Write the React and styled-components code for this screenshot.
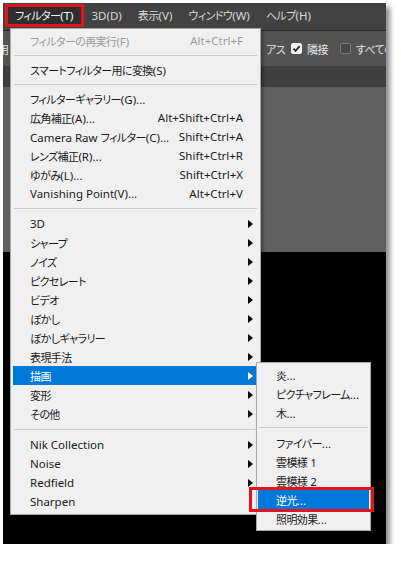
import React from "react";
import styled, { createGlobalStyle } from "styled-components";

const GlobalStyle = createGlobalStyle`
  html, body {
    margin: 0;
    padding: 0;
    background: #ffffff;
  }
  body {
    font-family: "Noto Sans", "Noto Sans CJK JP", sans-serif;
    font-size: 11.5px;
    font-feature-settings: "palt" 1;
  }
`;

// Frame of the screenshot
const Page = styled.div`
  padding: 3px 0 0 3px;
`;
const Frame = styled.div`
  position: relative;
  width: 383px;
  height: 541px;
  display: flex;
  flex-direction: column;
  overflow: hidden;
  box-shadow: 4px 4px 5px rgba(0, 0, 0, 0.45);
`;

// japanese runs are set a bit tighter, like Yu Gothic UI
const Jp = styled.span`
  font-family: "Noto Sans CJK JP", sans-serif;
  font-size: 11px;
  letter-spacing: -0.6px;
`;

const CJK = /([\u3000-\u30ff\u4e00-\u9fff\uff00-\uffef]+)/;
function Txt({ children }) {
  return children
    .split(CJK)
    .filter(Boolean)
    .map((part, i) => (CJK.test(part) ? <Jp key={i}>{part}</Jp> : <span key={i}>{part}</span>));
}

// Menu bar
const MenuBar = styled.div`
  height: 28px;
  box-sizing: border-box;
  padding: 1px 0 0 2px;
  display: flex;
  align-items: flex-start;
  background: #424242;
  border-bottom: 1px solid #2c2c2c;
  flex-shrink: 0;
`;
const BarItem = styled.div`
  height: 23px;
  line-height: 23px;
  padding: 0 ${(p) => (p.$open ? 10 : 8)}px;
  white-space: nowrap;
  background: ${(p) => (p.$open ? "#2e2e2e" : "transparent")};
  color: ${(p) => (p.$open ? "#f4f4f4" : "#d8d8d8")};
  box-shadow: ${(p) => (p.$open ? "inset 0 0 0 3px #e3141b" : "none")};
`;

// Options bar
const OptionsBar = styled.div`
  height: 35px;
  display: flex;
  align-items: center;
  background: #535353;
  color: #e2e2e2;
  white-space: nowrap;
  overflow: hidden;
  flex-shrink: 0;
  & > * {
    flex-shrink: 0;
  }
`;
const OptionsLead = styled.div`
  width: 282px;
  display: flex;
  justify-content: space-between;
  align-items: center;
`;
const Clipped = styled.span`
  margin-left: -5px;
`;
const CheckBox = styled.span`
  width: 11px;
  height: 11px;
  box-sizing: border-box;
  border-radius: 2px;
  display: inline-flex;
  align-items: center;
  justify-content: center;
  margin-left: ${(p) => p.$gap}px;
  margin-right: 5px;
  background: ${(p) => (p.$checked ? "#f0f0f0" : "#474747")};
  border: 1px solid ${(p) => (p.$checked ? "#f0f0f0" : "#777777")};
`;
const Band = styled.div`
  height: 21px;
  background: #3f3f3f;
  flex-shrink: 0;
`;
const GrayArea = styled.div`
  height: 165px;
  background: #5f5f5f;
  flex-shrink: 0;
`;
const BlackArea = styled.div`
  flex: 1;
  background: #000000;
`;

// Dropdown menus
const Menu = styled.div`
  position: absolute;
  left: ${(p) => p.$x}px;
  top: ${(p) => p.$y}px;
  width: ${(p) => p.$w}px;
  box-sizing: border-box;
  padding: ${(p) => p.$pad};
  background: #f0f0f0;
  border: 1px solid #a8a8a8;
  box-shadow: 2px 2px 3px rgba(0, 0, 0, 0.35);
  color: #1b1b1b;
`;
const Row = styled.div`
  position: relative;
  height: 19px;
  display: flex;
  align-items: center;
  padding: 0 5px 0 ${(p) => p.$indent}px;
  white-space: nowrap;
  background: ${(p) => (p.$active ? "#0078d7" : "transparent")};
  color: ${(p) => (p.$active ? "#ffffff" : p.$disabled ? "#9b9b9b" : "#1b1b1b")};
`;
const Label = styled.span`
  flex: 1;
`;
const Shortcut = styled.span``;
const ArrowSlot = styled.span`
  width: 10px;
  display: flex;
  justify-content: flex-end;
`;
const Arrow = styled.span`
  width: 0;
  height: 0;
  border-top: 4px solid transparent;
  border-bottom: 4px solid transparent;
  border-left: 5px solid ${(p) => (p.$light ? "#ffffff" : "#000000")};
`;
const Separator = styled.div`
  height: ${(p) => p.$h}px;
  display: flex;
  align-items: center;
  &::after {
    content: "";
    flex: 1;
    margin: 0 1px;
    border-top: 1px solid #cbcbcb;
  }
`;
const Callout = styled.span`
  position: absolute;
  left: -9px;
  right: -5px;
  top: -3px;
  bottom: -3px;
  border: 3px solid #e3141b;
  pointer-events: none;
`;

const filterItems = [
  { label: "フィルターの再実行(F)", shortcut: "Alt+Ctrl+F", disabled: true },
  { sep: 10 },
  { label: "スマートフィルター用に変換(S)" },
  { sep: 10 },
  { label: "フィルターギャラリー(G)..." },
  { label: "広角補正(A)...", shortcut: "Alt+Shift+Ctrl+A" },
  { label: "Camera Raw フィルター(C)...", shortcut: "Shift+Ctrl+A" },
  { label: "レンズ補正(R)...", shortcut: "Shift+Ctrl+R" },
  { label: "ゆがみ(L)...", shortcut: "Shift+Ctrl+X" },
  { label: "Vanishing Point(V)...", shortcut: "Alt+Ctrl+V" },
  { sep: 11 },
  { label: "3D", sub: true },
  { label: "シャープ", sub: true },
  { label: "ノイズ", sub: true },
  { label: "ピクセレート", sub: true },
  { label: "ビデオ", sub: true },
  { label: "ぼかし", sub: true },
  { label: "ぼかしギャラリー", sub: true },
  { label: "表現手法", sub: true },
  { label: "描画", sub: true, active: true },
  { label: "変形", sub: true },
  { label: "その他", sub: true },
  { sep: 12 },
  { label: "Nik Collection", sub: true },
  { label: "Noise", sub: true },
  { label: "Redfield", sub: true },
  { label: "Sharpen" },
];

const renderItems = [
  { label: "炎..." },
  { label: "ピクチャフレーム..." },
  { label: "木..." },
  { sep: 11 },
  { label: "ファイバー..." },
  { label: "雲模様 1" },
  { label: "雲模様 2" },
  { label: "逆光...", active: true, marked: true },
  { label: "照明効果..." },
];

function MenuRows({ items, indent }) {
  return items.map((it, i) =>
    it.sep ? (
      <Separator key={i} $h={it.sep} />
    ) : (
      <Row key={i} $indent={indent} $active={it.active} $disabled={it.disabled}>
        <Label>
          <Txt>{it.label}</Txt>
        </Label>
        {it.shortcut && <Shortcut>{it.shortcut}</Shortcut>}
        <ArrowSlot>{it.sub && <Arrow $light={it.active} />}</ArrowSlot>
        {it.marked && <Callout />}
      </Row>
    )
  );
}

const CheckMark = () => (
  <svg width="9" height="9" viewBox="0 0 9 9">
    <path d="M1.5 4.6 L3.6 6.8 L7.6 2.2" fill="none" stroke="#2a2a2a" strokeWidth="1.8" />
  </svg>
);

const barItems = ["フィルター(T)", "3D(D)", "表示(V)", "ウィンドウ(W)", "ヘルプ(H)"];

export default function App() {
  return (
    <>
      <GlobalStyle />
      <Page>
        <Frame>
          <MenuBar>
            {barItems.map((t, i) => (
              <BarItem key={t} $open={i === 0}>
                <Txt>{t}</Txt>
              </BarItem>
            ))}
          </MenuBar>
          <OptionsBar>
            <OptionsLead>
              <Clipped>
                <Txt>用</Txt>
              </Clipped>
              <Txt>アス</Txt>
            </OptionsLead>
            <CheckBox $checked $gap={6}>
              <CheckMark />
            </CheckBox>
            <Txt>隣接</Txt>
            <CheckBox $gap={12} />
            <Txt>すべてのレイヤー</Txt>
          </OptionsBar>
          <Band />
          <GrayArea />
          <BlackArea />

          <Menu $x={7} $y={25} $w={251} $pad="2px 2px 3px 2px">
            <MenuRows items={filterItems} indent={17} />
          </Menu>
          <Menu $x={253} $y={359} $w={115} $pad="2px 1px 2px 1px">
            <MenuRows items={renderItems} indent={18} />
          </Menu>
        </Frame>
      </Page>
    </>
  );
}
